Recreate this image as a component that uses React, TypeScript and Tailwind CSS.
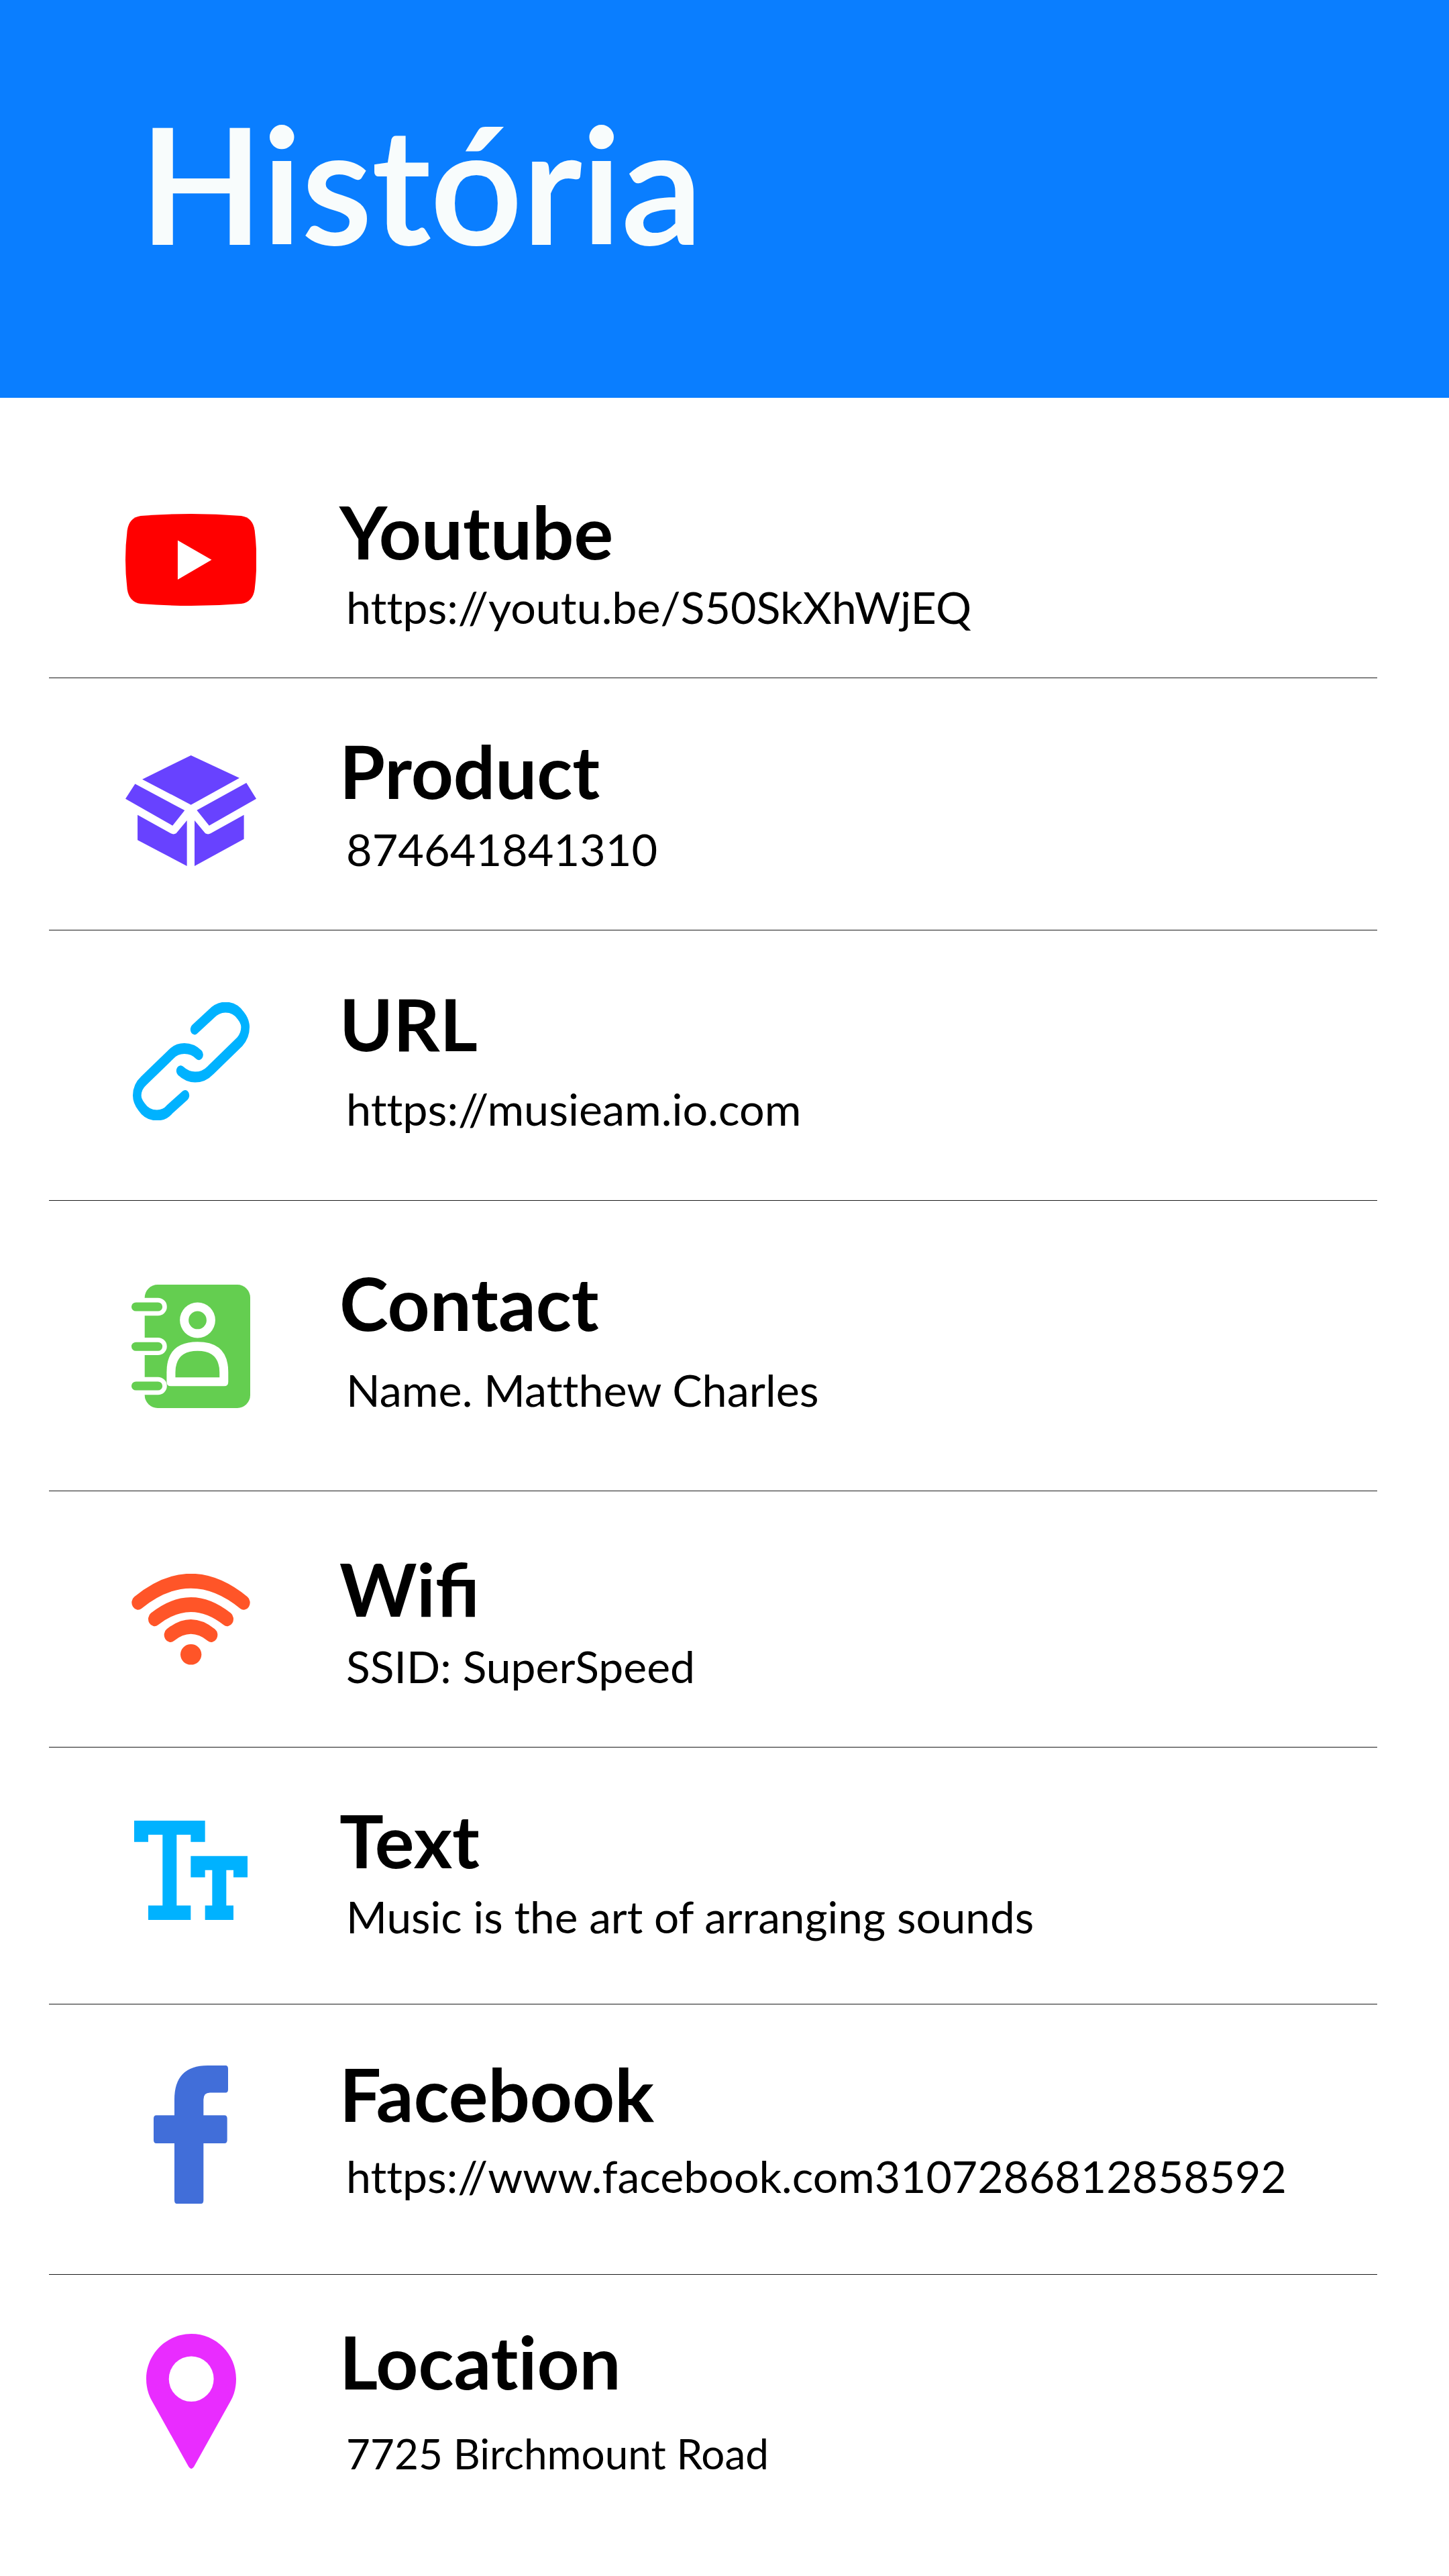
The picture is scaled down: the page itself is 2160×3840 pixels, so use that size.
const YoutubeIcon = () => (
  <svg viewBox="112 120 583 358" preserveAspectRatio="none" className="block w-[195px] h-[137px]">
    <path
      fill="#ff0000"
      d="M180 128 Q404 112 628 128 Q680 135 688 185 Q704 299 688 413 Q680 463 628 470 Q404 486 180 470 Q128 463 120 413 Q104 299 120 185 Q128 135 180 128Z"
    />
    <polygon fill="#ffffff" points="345,223 496,299 345,376" />
  </svg>
);

const BoxIcon = () => (
  <svg viewBox="112 1060 583 430" preserveAspectRatio="none" className="block w-[195px] h-[165px]" fill="#6842ff">
    <polygon points="404,1060 620,1148 404,1252 187,1153" />
    <polygon points="155,1171 376,1274 322,1333 112,1229" />
    <polygon points="651,1167 695,1229 485,1333 430,1273" />
    <path d="M166 1291 L314 1363 Q326 1369 338 1363 L386 1313 L386 1490 L166 1389Z" />
    <path d="M420 1313 L468 1363 Q480 1369 492 1363 L640 1291 L640 1385 L420 1490Z" />
  </svg>
);

const LinkIcon = () => (
  <svg
    viewBox="138 82 529 418"
    preserveAspectRatio="none"
    className="block w-[176px] h-[176px]"
    fill="none"
    stroke="#00b2ff"
    strokeWidth="38"
    strokeLinecap="round"
  >
    <path d="M418 178 L490 125 Q520 100 556 100 Q600 100 625 130 Q645 150 645 170 Q645 200 620 222 L490 322 Q460 347 420 347 Q385 347 355 325" />
    <path d="M375 412 L305 462 Q285 482 249 482 Q205 482 180 452 Q160 432 160 412 Q160 382 190 360 L310 268 Q335 246 372 246 Q410 246 437 268" />
  </svg>
);

const ContactIcon = () => (
  <svg viewBox="138 1080 530 438" preserveAspectRatio="none" className="block w-[177px] h-[184px]">
    <rect x="197" y="1080" width="471" height="438" rx="58" ry="46" fill="#64ce50" />
    <rect x="130" y="1127" width="166" height="63" rx="40" ry="31" fill="#ffffff" />
    <rect x="130" y="1268" width="166" height="62" rx="40" ry="31" fill="#ffffff" />
    <rect x="130" y="1408" width="166" height="63" rx="40" ry="31" fill="#ffffff" />
    <rect x="138" y="1143" width="138" height="31" rx="20" ry="15" fill="#64ce50" />
    <rect x="138" y="1284" width="138" height="31" rx="20" ry="15" fill="#64ce50" />
    <rect x="138" y="1424" width="138" height="31" rx="20" ry="15" fill="#64ce50" />
    <ellipse cx="433" cy="1206" rx="79" ry="63" fill="#ffffff" />
    <ellipse cx="433" cy="1206" rx="40" ry="32" fill="#64ce50" />
    <path fill="#ffffff" d="M295 1390 Q295 1283 433 1283 Q570 1283 570 1390 L570 1425 Q570 1440 552 1440 L313 1440 Q295 1440 295 1425Z" />
    <path fill="#64ce50" d="M334 1409 L334 1392 Q334 1315 433 1315 Q531 1315 531 1392 L531 1409Z" />
  </svg>
);

const WifiIcon = () => (
  <svg viewBox="138 120 531 355" preserveAspectRatio="none" className="block w-[177px] h-[136px]">
    <g fill="none" stroke="#ff5528" strokeWidth="56" strokeLinecap="round">
      <path d="M167 232 Q404 64 640 232" />
      <path d="M241 296 Q404 184 566 296" />
      <path d="M312 358 Q404 294 495 358" />
    </g>
    <ellipse cx="404" cy="434" rx="47" ry="40" fill="#ff5528" />
  </svg>
);

const TextIcon = () => (
  <svg viewBox="150 1082 507 387" preserveAspectRatio="none" className="block w-[169px] h-[148px]" fill="#00b2ff">
    <polygon points="150,1082 467,1082 467,1165 403,1165 403,1137 340,1137 340,1413 403,1413 403,1469 213,1469 213,1413 277,1413 277,1137 213,1137 213,1165 150,1165" />
    <polygon points="403,1220 657,1220 657,1303 594,1303 594,1275 562,1275 562,1413 594,1413 594,1469 467,1469 467,1413 499,1413 499,1275 467,1275 467,1303 403,1303" />
  </svg>
);

const FacebookIcon = () => (
  <svg viewBox="238 113 333 474" preserveAspectRatio="none" className="block w-[111px] h-[206px]">
    <path
      fill="#416ed9"
      d="M331 230 Q331 113 480 113 L560 113 Q571 113 571 124 L571 195 Q571 206 560 206 L490 206 Q461 206 461 230 L461 284 L555 284 Q567 284 567 295 L567 369 Q567 380 555 380 L461 380 L461 575 Q461 587 450 587 L342 587 Q331 587 331 575 L331 380 L250 380 Q238 380 238 369 L238 295 Q238 284 250 284 L331 284Z"
    />
  </svg>
);

const PinIcon = () => (
  <svg viewBox="203 1035 401 466" preserveAspectRatio="none" className="block w-[134px] h-[202px]">
    <path
      fill="#e92cff"
      d="M404 1035 C515 1035 604 1105 604 1190 C604 1220 595 1245 580 1265 L416 1492 Q404 1506 392 1492 L228 1265 C213 1245 203 1220 203 1190 C203 1105 293 1035 404 1035Z"
    />
    <ellipse cx="404" cy="1190" rx="100" ry="78" fill="#ffffff" />
  </svg>
);

// heights and paddings are per row, the spacing in the picture is uneven
const rows = [
  { title: "Youtube", sub: "https://youtu.be/S50SkXhWjEQ", icon: <YoutubeIcon />, row: "h-[418px] border-b", iconBox: "pt-[173px]", text: "pt-[132px]", subBox: "mt-[7px] text-[66.4px]", titleBox: "text-[110px]" },
  { title: "Product", sub: "874641841310", icon: <BoxIcon />, row: "h-[376px] border-b", iconBox: "pt-[115px]", text: "pt-[71px]", subBox: "mt-[11px] text-[66.7px]", titleBox: "text-[110px]" },
  { title: "URL", sub: "https://musieam.io.com", icon: <LinkIcon />, row: "h-[403px] border-b", iconBox: "pt-[107px]", text: "pt-[72px]", subBox: "mt-[21px] text-[66.5px]", titleBox: "text-[108px]" },
  { title: "Contact", sub: "Name. Matthew Charles", icon: <ContactIcon />, row: "h-[433px] border-b", iconBox: "pt-[125px]", text: "pt-[85px]", subBox: "mt-[24px] text-[66.5px]", titleBox: "text-[110px]" },
  { title: "Wifi", sub: "SSID: SuperSpeed", icon: <WifiIcon />, row: "h-[382px] border-b", iconBox: "pt-[123px]", text: "pt-[78px]", subBox: "mt-[11px] text-[66px]", titleBox: "text-[110px] [font-variant-ligatures:normal]" },
  { title: "Text", sub: "Music is the art of arranging sounds", icon: <TextIcon />, row: "h-[383px] border-b", iconBox: "pt-[109px]", text: "pt-[71px]", subBox: "mt-[9px] text-[65.7px]", titleBox: "text-[110px]" },
  { title: "Facebook", sub: "https://www.facebook.com3107286812858592", icon: <FacebookIcon />, row: "h-[403px] border-b", iconBox: "pt-[91px]", text: "pt-[66px]", subBox: "mt-[18px] text-[66.2px]", titleBox: "text-[110px]" },
  { title: "Location", sub: "7725 Birchmount Road", icon: <PinIcon />, row: "h-[449px]", iconBox: "pt-[88px]", text: "pt-[62px]", subBox: "mt-[32px] text-[62px]", titleBox: "text-[110px]" },
];

export default function App() {
  return (
    <div className="w-[2160px] h-[3840px] bg-white font-['Lato',sans-serif] text-black overflow-hidden [font-variant-ligatures:none]">
      <header className="h-[593px] bg-[#0a7eff] pl-[208px] pt-[127px]">
        <h1 className="text-[240px] leading-[288px] font-semibold text-[#f8fcfc] [-webkit-text-stroke:2px_#f8fcfc]">História</h1>
      </header>
      <ul className="pl-[73px] pr-[107px]">
        {rows.map((r) => (
          <li key={r.title} className={`flex border-[#1a1a1a] ${r.row}`}>
            <div className={`w-[433px] pr-[10px] flex justify-center items-start ${r.iconBox}`}>{r.icon}</div>
            <div className={r.text}>
              <div className={`leading-[132px] font-bold ${r.titleBox}`}>{r.title}</div>
              <div className={`pl-[10px] leading-[80px] ${r.subBox}`}>{r.sub}</div>
            </div>
          </li>
        ))}
      </ul>
    </div>
  );
}
